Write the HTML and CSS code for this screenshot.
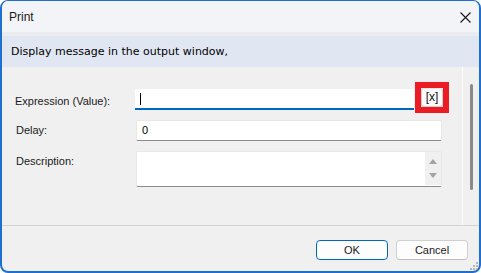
FILE: index.html
```html
<!DOCTYPE html>
<html lang="en">
	<head>
		<meta charset="UTF-8" />
		<meta name="viewport" content="width=device-width, initial-scale=1.0" />
		<title>Print</title>
		<link rel="stylesheet" href="styles.css">
	</head>
	<body>
		<div class="window">
			<div class="title-bar">
				<span class="title">Print</span>
				<svg class="close" width="11" height="11" viewBox="0 0 11 11">
					<path d="M0.5 0.5 L10.5 10.5 M10.5 0.5 L0.5 10.5" stroke="#1a1a1a" stroke-width="1.1" fill="none" />
				</svg>
			</div>
			<div class="strip"></div>
			<div class="info">Display message in the output window,</div>

			<div class="content">
				<div class="form">
					<div class="row">
						<label class="label label-first">Expression (Value):</label>
						<div class="field field-focus"><span class="caret"></span></div>
						<div class="var-frame">
							<div class="var-button">[x]</div>
						</div>
					</div>
					<div class="row">
						<label class="label">Delay:</label>
						<div class="field field-wide">0</div>
					</div>
					<div class="row">
						<label class="label">Description:</label>
						<div class="field field-wide field-multi">
							<div class="spin">
								<svg width="8" height="5" viewBox="0 0 8 5"><path d="M4 0 L8 5 L0 5 Z" fill="#a3a3a3" /></svg>
								<svg width="8" height="5" viewBox="0 0 8 5"><path d="M0 0 L8 0 L4 5 Z" fill="#a3a3a3" /></svg>
							</div>
						</div>
					</div>
				</div>
				<div class="scroll">
					<div class="thumb"></div>
				</div>
			</div>

			<div class="footer">
				<button class="btn btn-default">OK</button>
				<button class="btn">Cancel</button>
			</div>

			<svg class="grip" width="8" height="8" viewBox="0 0 8 8">
				<rect x="6" y="0" width="2" height="2" fill="#b5b5b5" />
				<rect x="3" y="3" width="2" height="2" fill="#b5b5b5" />
				<rect x="6" y="3" width="2" height="2" fill="#b5b5b5" />
				<rect x="0" y="6" width="2" height="2" fill="#b5b5b5" />
				<rect x="3" y="6" width="2" height="2" fill="#b5b5b5" />
				<rect x="6" y="6" width="2" height="2" fill="#b5b5b5" />
			</svg>
		</div>
	</body>
</html>
```

FILE: styles.css
```css
body {
	margin: 0;
	font-family: "Liberation Sans", Arial, sans-serif;
	background-color: #ffffff;
}

.window {
	position: relative;
	box-sizing: border-box;
	width: 481px;
	height: 273px;
	border: 2px solid #1f6fd1;
	border-top-width: 1px;
	border-radius: 8px;
	overflow: hidden;
	display: flex;
	flex-direction: column;
	background-color: #f0f0f0;
}

.title-bar {
	height: 31px;
	display: flex;
	align-items: center;
	justify-content: space-between;
	padding: 0 8px 0 7px;
	background-color: #f3f4f8;
}

.title {
	font-size: 12px;
	color: #1a1a1a;
}

.close {
	margin-top: 1px;
}

.strip {
	height: 4px;
	background-color: #ebecef;
}

.info {
	height: 31px;
	display: flex;
	align-items: center;
	padding-left: 9px;
	background-color: #e1e7f2;
	font-family: "DejaVu Sans", sans-serif;
	font-size: 11px;
	color: #000;
}

.content {
	height: 158px;
	display: flex;
	border-bottom: 1px solid #d3d3d3;
}

.form {
	width: 461px;
	box-sizing: border-box;
	padding: 22px 20px 0 14px;
	border-right: 1px solid #fbfbfb;
	display: flex;
	flex-direction: column;
	gap: 10px;
}

.row {
	display: flex;
	align-items: flex-start;
}

.label {
	width: 120px;
	flex-shrink: 0;
	font-size: 11px;
	line-height: 21px;
	color: #1a1a1a;
}

.label-first {
	padding-top: 2px;
	margin: 0 1px -2px -1px;
}

.field {
	box-sizing: border-box;
	height: 21px;
	background-color: #fff;
	font-size: 11px;
	line-height: 19px;
	padding-left: 5px;
	color: #000;
}

.field-focus {
	width: 280px;
	margin-left: -1px;
	border-bottom: 2px solid #0067c0;
	display: flex;
	align-items: center;
}

.caret {
	width: 1px;
	height: 12px;
	background-color: #000;
}

.field-wide {
	width: 307px;
	border: 1px solid #e8e8e8;
	border-bottom-color: #8a8a8a;
	border-radius: 2px;
}

.field-multi {
	height: 36px;
	display: flex;
	justify-content: flex-end;
	padding-left: 0;
}

.spin {
	width: 16px;
	height: 33px;
	background-color: #f0f0f0;
	display: flex;
	flex-direction: column;
	align-items: center;
	justify-content: space-around;
	padding: 2px 0;
	box-sizing: border-box;
}

.var-frame {
	box-sizing: border-box;
	width: 34px;
	height: 31px;
	margin: -7px -7px -3px 1px;
	border: 6px solid #ec1c24;
	display: flex;
	align-items: flex-start;
	justify-content: center;
}

.var-button {
	box-sizing: border-box;
	width: 22px;
	height: 19px;
	border: 1px solid #cfcfcf;
	border-top-color: #e6e6e6;
	border-radius: 3px;
	background-color: #fbfbfb;
	font-size: 12px;
	line-height: 16px;
	text-align: center;
	color: #111;
}

.scroll {
	width: 15px;
}

.thumb {
	width: 3px;
	height: 106px;
	margin: 17px 0 0 7px;
	border-radius: 2px;
	background-color: #8a8a8a;
}

.footer {
	flex: 1;
	display: flex;
	justify-content: flex-end;
	align-items: flex-start;
	gap: 8px;
	padding: 14px 11px 0 0;
}

.btn {
	width: 72px;
	height: 20px;
	padding: 0;
	border: 1px solid #d0d0d0;
	border-bottom-color: #bdbdbd;
	border-radius: 4px;
	background-color: #fdfdfd;
	font-family: "Liberation Sans", Arial, sans-serif;
	font-size: 11px;
	color: #1a1a1a;
}

.btn-default {
	border-color: #0067c0;
}

.grip {
	position: absolute;
	right: 1px;
	bottom: 1px;
}
```
